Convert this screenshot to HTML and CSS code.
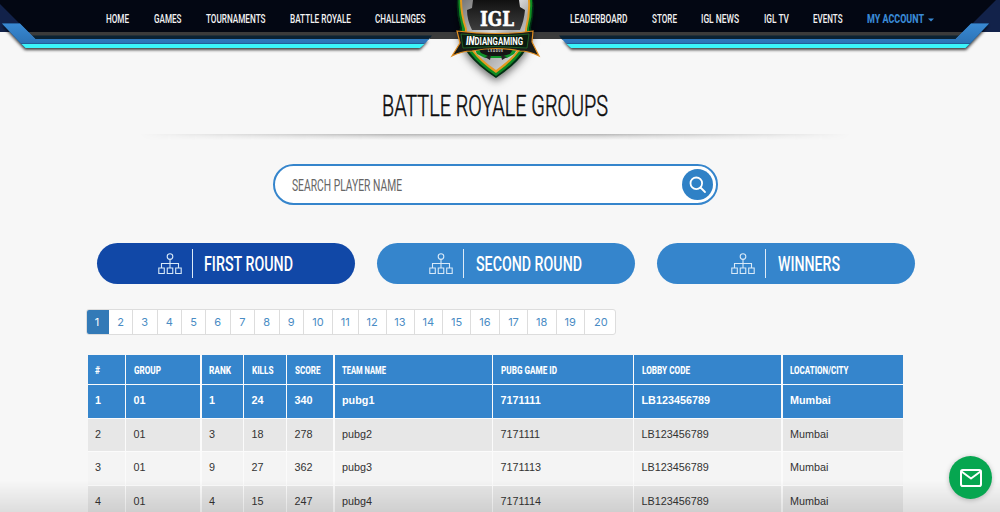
FILE: index.html
```
<!DOCTYPE html>
<html lang="en">
<head>
<meta charset="utf-8">
<title>Battle Royale Groups</title>
<link rel="stylesheet" href="styles.css">
</head>
<body>
<header class="header">
  <svg class="header-art" width="1000" height="90" viewBox="0 0 1000 90">
    <defs>
      <filter id="soft" x="-10%" y="-50%" width="120%" height="220%"><feDropShadow dx="0" dy="2" stdDeviation="1.8" flood-opacity=".75"/></filter>
      <filter id="glow" x="-30%" y="-30%" width="160%" height="160%"><feDropShadow dx="0" dy="3" stdDeviation="4" flood-opacity=".6"/></filter>
      <linearGradient id="blue" x1="0" y1="0" x2="0" y2="1"><stop offset="0" stop-color="#3989d3"/><stop offset="1" stop-color="#2c73b6"/></linearGradient>
      <linearGradient id="steel" x1="0" y1="0" x2="1" y2="1"><stop offset="0" stop-color="#777"/><stop offset=".45" stop-color="#d5d5d5"/><stop offset=".6" stop-color="#aaa"/><stop offset="1" stop-color="#eee"/></linearGradient>
      <linearGradient id="coal" x1="0" y1="0" x2="0" y2="1"><stop offset="0" stop-color="#111"/><stop offset="1" stop-color="#3d3d3d"/></linearGradient>
      <g id="rail">
        <path d="M2 23.5H20L35 39H428L420 48H25Z" fill="#154879" filter="url(#soft)"/>
        <path d="M19 22L36 39.500H44V22Z" fill="#030713"/>
        <path d="M29 32H431V36H33Z" fill="#3b3b3b"/>
        <path d="M32 35.5H432L429 39.500H36Z" fill="#0b2233"/>
        <path d="M2 23.500H20L35.500 39H429L425 43.500H21Z" fill="url(#blue)"/>
        <path d="M21.500 44H424.500L420 48H25.500Z" fill="#3bf4fa"/>
      </g>
    </defs>
    <path d="M0 0H1000V32H0Z" fill="#12224a"/>
    <path d="M0 0H996L964 32H28L0 4Z" fill="#030713"/>
    <path d="M430 32H562V39H430Z" fill="#3b3b3b"/>
    <use href="#rail"/>
    <use href="#rail" transform="translate(991 0) scale(-1 1)"/>
    <g filter="url(#glow)">
      <path d="M457 0H533Q535 12 531 27Q535 52 496 78Q456 52 460 27Q456 12 457 0Z" fill="#062f12"/>
      <path d="M458.500 0H532Q533 14 529 28Q531 52 496 76Q460 52 462 28Q458 14 458.500 0Z" fill="#108c22"/>
      <path d="M460 0H530Q531 14 527 29Q528 50 496 73Q463 50 465 29Q460 14 460 0Z" fill="#e49a20"/>
      <path d="M462 0H528Q529 14 525 29Q526 49 496 70Q465 49 467 29Q462 14 462 0Z" fill="url(#steel)"/>
    </g>
    <path d="M473 0H519L520 7L525 10Q524 21 520 30H472Q467 20 467 10L472 8Z" fill="url(#coal)"/>
    <path d="M474 48H518L514 54L507 58H485L477 54Z" fill="#11952a"/>
    <path d="M478 48H514L510 54L503 56H488L481 53Z" fill="#151515"/>
    <path d="M485 57L491 55L490 60ZM507 57L501 55L502 60Z" fill="#222"/>
    <path d="M457 31Q496 36 533 31L532 42L539 56Q529 51 520 51Q496 46 472 51Q462 51 452 56L460 43Z" fill="#191b18" stroke="#e08d20" stroke-width="1.200"/>
    <path d="M461 34Q496 38 529 34L527 48Q496 45 463 48Z" fill="#0a1b0e" stroke="#258b32" stroke-width=".6"/>
    <text class="logo-main" x="480" y="25.500" textLength="34" lengthAdjust="spacingAndGlyphs">IGL</text>
    <text class="logo-name" x="466" textLength="57" lengthAdjust="spacingAndGlyphs"><tspan class="logo-in">IN</tspan>DIANGAMING</text>
    <text class="logo-sub" x="488" y="52.300" textLength="15">LEAGUE</text>
  </svg>
  <nav class="nav">
    <div class="nav-group">
      <svg width="23" height="16"><text textLength="23" lengthAdjust="spacingAndGlyphs">HOME</text></svg>
      <svg width="27.500" height="16"><text textLength="27.500" lengthAdjust="spacingAndGlyphs">GAMES</text></svg>
      <svg width="59.500" height="16"><text textLength="59.500" lengthAdjust="spacingAndGlyphs">TOURNAMENTS</text></svg>
      <svg width="61" height="16"><text textLength="61" lengthAdjust="spacingAndGlyphs">BATTLE ROYALE</text></svg>
      <svg width="50.500" height="16"><text textLength="50.500" lengthAdjust="spacingAndGlyphs">CHALLENGES</text></svg>
    </div>
    <div class="nav-group">
      <svg width="57.500" height="16"><text textLength="57.500" lengthAdjust="spacingAndGlyphs">LEADERBOARD</text></svg>
      <svg width="25" height="16"><text textLength="25" lengthAdjust="spacingAndGlyphs">STORE</text></svg>
      <svg width="38" height="16"><text textLength="38" lengthAdjust="spacingAndGlyphs">IGL NEWS</text></svg>
      <svg width="25" height="16"><text textLength="25" lengthAdjust="spacingAndGlyphs">IGL TV</text></svg>
      <svg width="29.500" height="16"><text textLength="29.500" lengthAdjust="spacingAndGlyphs">EVENTS</text></svg>
      <svg class="account" width="68" height="16"><text textLength="57" lengthAdjust="spacingAndGlyphs">MY ACCOUNT</text><path d="M61 8.500H67L64 11.500Z"/></svg>
    </div>
  </nav>
</header>

<main>
  <h1 class="title"><svg width="226" height="34"><text y="27" textLength="226" lengthAdjust="spacingAndGlyphs">BATTLE ROYALE GROUPS</text></svg></h1>
  <div class="rule"></div>
  <div class="search">
    <svg width="110" height="22"><text y="17" textLength="110" lengthAdjust="spacingAndGlyphs">SEARCH PLAYER NAME</text></svg>
    <span class="search-btn"><svg width="18" height="18" viewBox="0 0 18 18"><circle cx="7.300" cy="7.300" r="5.800"/><path d="M11.500 11.500L16 16"/></svg></span>
  </div>
  <svg class="defs" width="0" height="0"><symbol id="tree" viewBox="0 0 24 22"><path d="M12 6.500V15M3.500 15V10.500H20.500V15M.800 15H6.300V20.500H.800ZM9.250 15H14.750V20.500H9.250ZM17.700 15H23.200V20.500H17.700Z"/><circle cx="12" cy="3.600" r="2.800"/></symbol></svg>
  <div class="rounds">
    <a class="round active"><svg class="tree" width="24" height="22"><use href="#tree"/></svg><i></i><svg width="89" height="26"><text y="20" textLength="89" lengthAdjust="spacingAndGlyphs">FIRST ROUND</text></svg></a>
    <a class="round"><svg class="tree" width="24" height="22"><use href="#tree"/></svg><i></i><svg width="106" height="26"><text y="20" textLength="106" lengthAdjust="spacingAndGlyphs">SECOND ROUND</text></svg></a>
    <a class="round"><svg class="tree" width="24" height="22"><use href="#tree"/></svg><i></i><svg width="62" height="26"><text y="20" textLength="62" lengthAdjust="spacingAndGlyphs">WINNERS</text></svg></a>
  </div>
  <div class="pages">
    <a class="current">1</a><a>2</a><a>3</a><a>4</a><a>5</a><a>6</a><a>7</a><a>8</a><a>9</a><a>10</a><a>11</a><a>12</a><a>13</a><a>14</a><a>15</a><a>16</a><a>17</a><a>18</a><a>19</a><a>20</a>
  </div>
  <div class="grid head">
    <span><svg width="5" height="14"><text y="11" textLength="5" lengthAdjust="spacingAndGlyphs">#</text></svg></span>
    <span><svg width="27" height="14"><text y="11" textLength="27" lengthAdjust="spacingAndGlyphs">GROUP</text></svg></span>
    <span><svg width="22" height="14"><text y="11" textLength="22" lengthAdjust="spacingAndGlyphs">RANK</text></svg></span>
    <span><svg width="21.500" height="14"><text y="11" textLength="21.500" lengthAdjust="spacingAndGlyphs">KILLS</text></svg></span>
    <span><svg width="25.500" height="14"><text y="11" textLength="25.500" lengthAdjust="spacingAndGlyphs">SCORE</text></svg></span>
    <span><svg width="44" height="14"><text y="11" textLength="44" lengthAdjust="spacingAndGlyphs">TEAM NAME</text></svg></span>
    <span><svg width="56" height="14"><text y="11" textLength="56" lengthAdjust="spacingAndGlyphs">PUBG GAME ID</text></svg></span>
    <span><svg width="48" height="14"><text y="11" textLength="48" lengthAdjust="spacingAndGlyphs">LOBBY CODE</text></svg></span>
    <span><svg width="58.500" height="14"><text y="11" textLength="58.500" lengthAdjust="spacingAndGlyphs">LOCATION/CITY</text></svg></span>
  </div>
  <div class="grid first"><span>1</span><span>01</span><span>1</span><span>24</span><span>340</span><span>pubg1</span><span>7171111</span><span>LB123456789</span><span>Mumbai</span></div>
  <div class="grid even"><span>2</span><span>01</span><span>3</span><span>18</span><span>278</span><span>pubg2</span><span>7171111</span><span>LB123456789</span><span>Mumbai</span></div>
  <div class="grid"><span>3</span><span>01</span><span>9</span><span>27</span><span>362</span><span>pubg3</span><span>7171113</span><span>LB123456789</span><span>Mumbai</span></div>
  <div class="grid even"><span>4</span><span>01</span><span>4</span><span>15</span><span>247</span><span>pubg4</span><span>7171114</span><span>LB123456789</span><span>Mumbai</span></div>
</main>
<div class="fade"></div>
<a class="mail"><svg width="22" height="18" viewBox="0 0 22 18"><rect x="1" y="1" width="20" height="16" rx="1.800"/><path d="M1.500 2.500L11 9.500L20.500 2.500"/></svg></a>
</body>
</html>
```
FILE: styles.css
```
* { box-sizing: border-box; }
body {
  margin: 0;
  height: 512px;
  overflow: hidden;
  background: #f7f7f7;
  font-family: "Liberation Sans", Arial, sans-serif;
}
svg { display: block; flex: none; overflow: visible; }
svg text { font-family: Roboto, sans-serif; }

.header { display: grid; height: 90px; }
.header-art, .nav { grid-area: 1 / 1; }
.header .logo-main { font: bold 20px "DejaVu Serif", serif; fill: #fff; stroke: #fff; stroke-width: .6; }
.header .logo-name { font: bold 8px Roboto, sans-serif; fill: #fff; transform: translateY(45.3px) scaleY(1.4); }
.logo-in { font-size: 9px; font-style: italic; font-weight: 900; }
.header .logo-sub { font: bold 3px Roboto, sans-serif; fill: #ddd; }
.nav {
  display: flex;
  justify-content: space-between;
  height: 36px;
  padding: 10px 65px 0 106px;
  z-index: 1;
}
.nav-group { display: flex; gap: 24.5px; }
.nav text {
  font-size: 9.3px;
  font-weight: 500;
  fill: #f3f3f3;
  transform: translateY(13px) scaleY(1.4);
}
.nav .account text { font-weight: 800; fill: #3989d3; }
.account path { fill: #3989d3; }

.title { display: flex; justify-content: center; margin: 0; padding-right: 10px; height: 44px; }
.title text { font-size: 29.5px; font-weight: 300; fill: #0c0c0c; stroke: #0c0c0c; stroke-width: .5; }
.title svg { margin-top: -1px; }
.rule {
  width: 710px;
  height: 6px;
  margin-left: 140px;
  background: linear-gradient(#b5b5b5, #dcdcdc 45%, #f7f7f7);
  mask-image: linear-gradient(90deg, transparent, #000 35%, #000 65%, transparent);
}
.search {
  display: flex;
  align-items: center;
  justify-content: space-between;
  width: 445px;
  height: 41px;
  margin: 24px 0 0 273px;
  padding: 0 3px 0 17px;
  border: 2px solid #3585cc;
  border-radius: 21px;
  background: #fff;
}
.search text { font-size: 16.5px; font-weight: 400; fill: #666; }
.search-btn {
  display: grid;
  place-items: center;
  width: 31px;
  height: 31px;
  border-radius: 50%;
  background: #2f81c6;
}
.search-btn svg { fill: none; stroke: #fff; stroke-width: 1.8; stroke-linecap: round; }
.defs { position: absolute; }

.rounds { display: flex; gap: 22px; margin: 38px 0 0 97px; }
.round {
  display: flex;
  align-items: center;
  justify-content: center;
  width: 258px;
  height: 41px;
  padding-right: 1px;
  border-radius: 21px;
  background: #3585cc;
}
.round.active { background: #1148a7; }
.round i { width: 1px; height: 29px; margin: 0 11.5px 0 10px; background: #dceaf7; }
.round text { font-size: 20px; font-weight: 500; fill: #fff; }
.tree { fill: none; stroke: #d8e9f8; stroke-width: 1.1; }

.pages {
  display: grid;
  grid-template-columns: 22px 24px 24.5px 24.5px 24px 24.5px 24.5px 24.5px 24.5px 29px 25.5px 28px 28px 28.5px 28px 29px 28px 28.5px 28.5px 31.5px;
  width: 530px;
  height: 26px;
  margin: 25px 0 0 86px;
  border: 1px solid #ddd;
  border-radius: 3px;
  background: #fff;
  overflow: hidden;
}
.pages a {
  border-right: 1px solid #ddd;
  color: #4a8cc4;
  font: 11px/25px Inter, sans-serif;
  text-align: center;
}
.pages a:last-child { border: 0; }
.pages .current { margin: -1px 0 -1px -1px; padding-top: 1px; background: #337ab7; border-color: #337ab7; color: #fff; }

.grid {
  display: grid;
  grid-template-columns: 37px 74px 41px 41.5px 46px 157px 139.5px 147px 120.5px;
  column-gap: 1.5px;
  width: 815.5px;
  height: 33.5px;
  margin-left: 87.5px;
  border-bottom: 1px solid #fbfbfb;
  background: #fbfbfb;
  font-size: 10.8px;
  color: #333;
}
.grid span {
  display: flex;
  align-items: center;
  padding: 0 0 2px 7.5px;
  background: #f4f4f4;
}
.grid.even span { background: #e7e7e7; }
.grid.head { height: 30px; margin-top: 20px; }
.grid.head span { padding-bottom: 0; }
.grid.head text { font-size: 11.5px; font-weight: 800; fill: #fff; }
.grid.head span, .grid.first span { background: #3585cc; }
.grid.first { color: #fff; font-weight: 700; }

.fade {
  position: fixed;
  inset: 480px 0 0;
  background: linear-gradient(transparent, rgba(0, 0, 0, .1));
}
.mail {
  position: fixed;
  left: 949px;
  top: 456px;
  display: grid;
  place-items: center;
  width: 43px;
  height: 43px;
  border-radius: 50%;
  background: #06a650;
  box-shadow: 0 1px 5px rgba(0, 0, 0, .25);
}
.mail svg { fill: none; stroke: #fff; stroke-width: 2; stroke-linejoin: round; }
```
